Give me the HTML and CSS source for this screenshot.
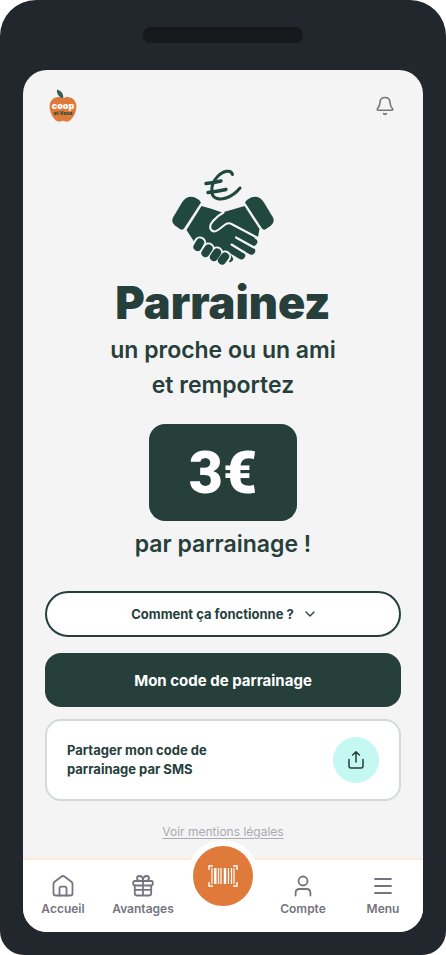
FILE: index.html
```html
<!DOCTYPE html>
<html lang="fr">
<head>
<meta charset="utf-8">
<meta name="viewport" content="width=device-width, initial-scale=1">
<title>Parrainage</title>
<link rel="stylesheet" href="styles.css">
</head>
<body>
<div class="device">
  <div class="speaker"></div>
  <div class="screen">
    <header class="topbar">
      <a class="logo" href="#" aria-label="Coop et vous">
        <svg width="28" height="34" viewBox="0 0 28 34">
          <path d="M14 9.600C10.800 6.200 1 7.600.6 17c-.2 7 4.400 14.600 8.900 15.600 1.800.4 3-.8 4.500-.8s2.700 1.200 4.500.8c4.500-1 9.100-8.600 8.900-15.600C27 7.600 17.200 6.200 14 9.600z" fill="#e07a3b"/>
          <path d="M8 .4c4 1 6.600 4.200 6.300 9C10.600 8.600 7.400 5.400 8 .4z" fill="#2e6153"/>
          <text class="logo-name" x="14" y="20" text-anchor="middle">coop</text>
          <text class="logo-sub" x="14" y="26" text-anchor="middle">et Vous</text>
        </svg>
      </a>
      <button class="bell" type="button" aria-label="Notifications">
        <svg class="line" width="18" height="20" viewBox="0 0 18 20">
          <path d="M9 1.500C5.800 1.500 4.100 3.600 4 6.400c-.1 3.400-.8 4.300-2.500 6.300-.6.700-.3 1.600.6 1.600h13.800c.9 0 1.200-.9.6-1.600-1.700-2-2.400-2.900-2.500-6.300-.1-2.800-1.800-4.900-5-4.900z"/>
          <path d="M7.600 17.600c.8.700 2 .7 2.800 0"/>
        </svg>
      </button>
    </header>

    <main class="content">
      <svg class="hands" width="104" height="98" viewBox="0 0 104 98">
        <g fill="none" stroke="#20483c" stroke-linecap="round" stroke-linejoin="round">
          <path stroke-width="3" d="M61.500 6.500C60 1 52 3 47 8c-5 5-7 11-6 17 1 6 8 7 14 5 6-2 10-5 14-10"/>
          <path stroke-width="3.400" d="M35 15.500c6-.5 10-1.200 15-2.500M37 24.500c6-.6 12-1.600 18-3"/>
        </g>
        <g fill="#20483c">
          <path d="M30 34.500 13 60.500q-1.500 2-4 .5L4 57.500Q0 54 2 49.500L11 34.500Q16 26.500 24 29.500 28.500 31.500 30 34.500z"/>
          <path d="M74 34.500 91 60.500q1.500 2 4 .5l5-3.500q4-3.500 2-8L93 34.500q-5-8-13-5-4.500 2-6 5z"/>
        </g>
        <path d="M30.500 38q10 2.500 20.500 6.500Q62 41.500 73.500 38L88.500 61l-1.500 8-20 4-7 18-8-1-29-16.500-7.500-11.500z" fill="#20483c"/>
        <g fill="none" stroke-linecap="round">
          <path stroke="#f4f4f4" stroke-width="11.500" d="M58 71 80 83.500M55 79l15.500 9M56 87l2.500 4"/>
          <path stroke="#20483c" stroke-width="6" d="M56 86l3 5"/>
          <path stroke="#20483c" stroke-width="7.400" d="M54 78l16.500 9.700M56 69.500 80.500 83"/>
          <path stroke="#20483c" stroke-width="7.600" d="M58 60.500 82.500 74"/>
        </g>
        <path d="M30 55h22l13 14-9 16-27-8z" fill="#20483c"/>
        <g fill="none" stroke="#f4f4f4" stroke-width="2.100" stroke-linecap="round" stroke-linejoin="round">
          <path d="M52.500 44.500Q46 48 42 53c-6 7-1 13 5 9 3-2 5-4 8-6 2-1.200 4-1 6 .2L86 69.500"/>
          <path d="m65 69.500 18 10M60.500 76.500l13 8"/>
        </g>
        <g stroke-linecap="round">
          <path stroke="#f4f4f4" stroke-width="12.200" d="m29 74.500-2.500 4.500M37.500 80.500l-3 4.500M46 84.500l-3 4.500M54 88.500l-3 4"/>
          <path stroke="#20483c" stroke-width="8.200" d="m29 74.500-2.500 4.500M37.500 80.500l-3 4.500M46 84.500l-3 4.500M54 88.500l-3 4"/>
        </g>
      </svg>

      <h1 class="title">Parrainez</h1>
      <p class="lead">un proche ou un ami<br>et remportez</p>
      <div class="amount">3€</div>
      <p class="lead">par parrainage !</p>

      <div class="actions">
        <button class="how" type="button">
          Comment ça fonctionne ?
          <svg width="10" height="6" viewBox="0 0 10 6" fill="none" stroke="#263f3b" stroke-width="1.300" stroke-linecap="round" stroke-linejoin="round"><path d="m1 1 4 4 4-4"/></svg>
        </button>
        <button class="code" type="button">Mon code de parrainage</button>
        <button class="share" type="button">
          <span>Partager mon code de<br>parrainage par SMS</span>
          <span class="share-icon">
            <svg width="16" height="20" viewBox="0 0 16 20" fill="none" stroke="#263f3b" stroke-width="1.500" stroke-linecap="round" stroke-linejoin="round"><path d="M8 12V2M4.700 5 8 1.700 11.300 5M1 9.500V16c0 1.300.7 2 2 2h10c1.300 0 2-.7 2-2V9.500"/></svg>
          </span>
        </button>
      </div>
      <a class="legal" href="#">Voir mentions légales</a>
    </main>

    <nav class="tabs">
      <a class="tab" href="#">
        <svg class="line" width="22" height="22" viewBox="0 0 22 22"><path d="M1.500 9c0-1 .3-1.600 1.100-2.200l7-5.300c.9-.7 1.900-.7 2.800 0l7 5.300c.8.600 1.100 1.200 1.100 2.200v9.200c0 1.400-.8 2.300-2.300 2.300H3.800c-1.500 0-2.300-.9-2.300-2.300z"/><path d="M7.500 20.500v-7c0-1.200.6-1.800 1.800-1.800h3.400c1.200 0 1.800.6 1.800 1.800v7"/></svg>
        Accueil
      </a>
      <a class="tab" href="#">
        <svg class="line" width="22" height="22" viewBox="0 0 22 22"><rect x="1.200" y="6" width="19.600" height="4.500" rx="1.500"/><path d="M2.800 10.500V18.200c0 1.400.8 2.300 2.300 2.300h11.800c1.500 0 2.300-.9 2.300-2.300v-7.700M11 6v14.500M3 14.800h16M11 6C8 6 5 5.500 5 3.400 5 1.800 6.200 1 7.500 1 9.800 1 11 3.500 11 6zM11 6c3 0 6-.5 6-2.600C17 1.800 15.800 1 14.500 1 12.200 1 11 3.500 11 6z"/></svg>
        Avantages
      </a>
      <button class="scan" type="button" aria-label="Scanner">
        <svg width="30" height="22" viewBox="0 0 30 22" fill="none" stroke="#fff"><path stroke-width="1.400" d="M5 1H1v4M25 1h4v4M5 21H1v-4M25 21h4v-4"/><path stroke-width="1.200" d="M4 3v16M10.500 3v16M13 3v16M20.500 3v16M23.500 3v16M26 3v16"/><path stroke-width="2.400" d="M7.300 3v16M17 3v16"/></svg>
      </button>
      <a class="tab" href="#">
        <svg class="line" width="22" height="22" viewBox="0 0 22 22"><circle cx="11" cy="6" r="4.500"/><path d="M3.600 20.500V18c0-2.600 1.400-4 4-4h6.800c2.600 0 4 1.400 4 4v2.500"/></svg>
        Compte
      </a>
      <a class="tab" href="#">
        <svg class="line" width="22" height="22" viewBox="0 0 22 22"><path d="M3 4h16M3 11h16M3 18h16"/></svg>
        Menu
      </a>
    </nav>
  </div>
</div>
</body>
</html>
```
FILE: styles.css
```css
* { box-sizing: border-box; }
body {
  margin: 0;
  background: #fff;
  color: #263f3b;
  font-family: Inter, "Liberation Sans", sans-serif;
}
button {
  font: inherit;
  color: inherit;
  border: 0;
  padding: 0;
  background: none;
  cursor: pointer;
}
a { color: inherit; text-decoration: none; }
svg { display: block; }
.line {
  fill: none;
  stroke: #757480;
  stroke-width: 1.8;
  stroke-linecap: round;
  stroke-linejoin: round;
}
.bell .line { stroke-width: 1.6; }

.device {
  min-height: 100vh;
  padding: 27px 23px 23px;
  display: flex;
  flex-direction: column;
  background: #22262d;
  border-radius: 36px 36px 24px 24px;
}
.speaker {
  width: 160px;
  height: 16px;
  margin: 0 auto 27px;
  border-radius: 8px;
  background: #15191b;
}
.screen {
  flex: 1;
  display: flex;
  flex-direction: column;
  overflow: hidden;
  border-radius: 24px;
  background: #f4f4f4;
}
.topbar {
  display: flex;
  justify-content: space-between;
  align-items: center;
  padding: 19px 29px 0 26px;
}
.logo-name { font: 900 9px Inter, sans-serif; fill: #fff; }
.logo-sub { font: 900 5px Inter, sans-serif; fill: #2e4f3c; }

.content {
  flex: 1;
  display: flex;
  flex-direction: column;
  align-items: center;
  padding: 45px 22px 0;
  text-align: center;
}
.title {
  margin: 11px 0 4px;
  font-size: 45px;
  line-height: 52px;
  font-weight: 900;
}
.lead {
  margin: 0;
  font-size: 23px;
  line-height: 35px;
  font-weight: 600;
}
.amount {
  margin: 21px 0 6px;
  padding: 16px 40px;
  border-radius: 16px;
  background: #263f3b;
  color: #fff;
  font-family: Roboto, "Liberation Sans", sans-serif;
  font-size: 59px;
  line-height: 65px;
  font-weight: 900;
}
.actions {
  width: 100%;
  margin-top: 29px;
  display: flex;
  flex-direction: column;
  gap: 12px;
}
.how {
  height: 46px;
  margin-bottom: 4px;
  display: flex;
  align-items: center;
  justify-content: center;
  gap: 11px;
  border: 2px solid #263f3b;
  border-radius: 24px;
  background: #fff;
  font-size: 13px;
  font-weight: 700;
}
.code {
  height: 54px;
  border-radius: 16px;
  background: #263f3b;
  color: #fff;
  font-size: 15px;
  font-weight: 700;
}
.share {
  display: flex;
  align-items: center;
  justify-content: space-between;
  padding: 16px 20px;
  border: 2px solid #d3dad9;
  border-radius: 16px;
  background: #fff;
  text-align: left;
  font-size: 13px;
  line-height: 19px;
  font-weight: 700;
}
.share-icon {
  width: 46px;
  height: 46px;
  display: grid;
  place-items: center;
  border-radius: 50%;
  background: #c5f7f3;
}
.legal {
  margin-top: 23px;
  color: #aaaab1;
  font-size: 12px;
  line-height: 16px;
  text-decoration: underline;
  text-underline-offset: 2px;
}

.tabs {
  height: 74px;
  display: grid;
  grid-template-columns: repeat(5, 1fr);
  border-top: 2px solid #fbeadb;
  background: #fff;
}
.tab {
  display: flex;
  flex-direction: column;
  align-items: center;
  gap: 5px;
  padding-top: 15px;
  color: #757480;
  font-size: 12px;
  line-height: 14px;
  font-weight: 600;
}
.scan {
  width: 72px;
  height: 72px;
  justify-self: center;
  margin-top: -20px;
  display: grid;
  place-items: center;
  border: 6px solid #fff;
  border-radius: 50%;
  background: #e07a3b;
}
```
